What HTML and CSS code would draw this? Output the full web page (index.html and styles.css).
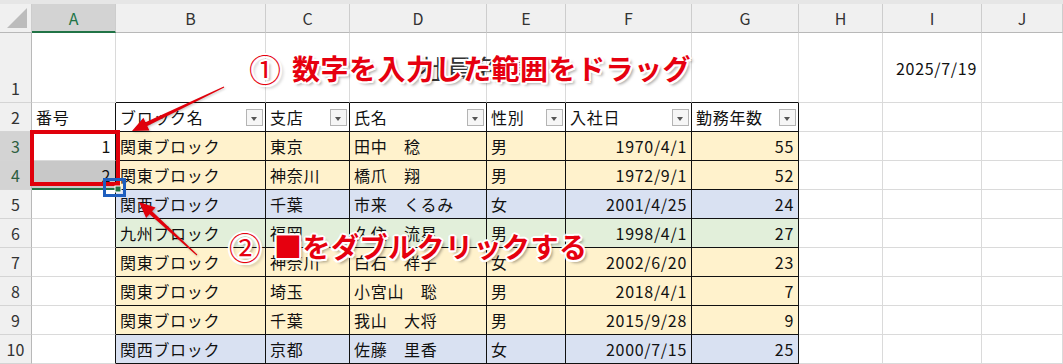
FILE: index.html
```html
<!DOCTYPE html>
<html lang="ja">
<head>
<meta charset="utf-8">
<link rel="stylesheet" href="styles.css">
</head>
<body>
<div class="app">
  <div class="strip"></div>
  <div class="sheet">
    <!-- column headers -->
    <div class="ch corner"><span class="tri"></span></div>
    <div class="ch sel">A</div>
    <div class="ch">B</div>
    <div class="ch">C</div>
    <div class="ch">D</div>
    <div class="ch">E</div>
    <div class="ch">F</div>
    <div class="ch">G</div>
    <div class="ch">H</div>
    <div class="ch">I</div>
    <div class="ch">J</div>

    <!-- row 1 -->
    <div class="rh bottom">1</div>
    <div class="c"></div>
    <div class="c bb"></div>
    <div class="c bb"></div>
    <div class="c bb spill"><span class="title">社員名簿</span></div>
    <div class="c bb"></div>
    <div class="c bb"></div>
    <div class="c bb"></div>
    <div class="c"></div>
    <div class="c num mid">2025/7/19</div>
    <div class="c"></div>

    <!-- row 2 -->
    <div class="rh">2</div>
    <div class="c lb">番号</div>
    <div class="c t th"><span>ブロック名</span><span class="fb"></span></div>
    <div class="c t th"><span>支店</span><span class="fb"></span></div>
    <div class="c t th"><span>氏名</span><span class="fb"></span></div>
    <div class="c t th"><span>性別</span><span class="fb"></span></div>
    <div class="c t th"><span>入社日</span><span class="fb"></span></div>
    <div class="c t th"><span>勤務年数</span><span class="fb"></span></div>
    <div class="c"></div>
    <div class="c"></div>
    <div class="c"></div>

    <!-- row 3 -->
    <div class="rh sel">3</div>
    <div class="c lb num">1</div>
    <div class="c t y">関東ブロック</div>
    <div class="c t y">東京</div>
    <div class="c t y">田中　稔</div>
    <div class="c t y">男</div>
    <div class="c t y num">1970/4/1</div>
    <div class="c t y num">55</div>
    <div class="c"></div>
    <div class="c"></div>
    <div class="c"></div>

    <!-- row 4 -->
    <div class="rh sel">4</div>
    <div class="c lb num selcell">2</div>
    <div class="c t y">関東ブロック</div>
    <div class="c t y">神奈川</div>
    <div class="c t y">橋爪　翔</div>
    <div class="c t y">男</div>
    <div class="c t y num">1972/9/1</div>
    <div class="c t y num">52</div>
    <div class="c"></div>
    <div class="c"></div>
    <div class="c"></div>

    <!-- row 5 -->
    <div class="rh">5</div>
    <div class="c lb"></div>
    <div class="c t b">関西ブロック</div>
    <div class="c t b">千葉</div>
    <div class="c t b">市来　くるみ</div>
    <div class="c t b">女</div>
    <div class="c t b num">2001/4/25</div>
    <div class="c t b num">24</div>
    <div class="c"></div>
    <div class="c"></div>
    <div class="c"></div>

    <!-- row 6 -->
    <div class="rh">6</div>
    <div class="c lb"></div>
    <div class="c t g">九州ブロック</div>
    <div class="c t g">福岡</div>
    <div class="c t g">久住　流星</div>
    <div class="c t g">男</div>
    <div class="c t g num">1998/4/1</div>
    <div class="c t g num">27</div>
    <div class="c"></div>
    <div class="c"></div>
    <div class="c"></div>

    <!-- row 7 -->
    <div class="rh">7</div>
    <div class="c lb"></div>
    <div class="c t y">関東ブロック</div>
    <div class="c t y">神奈川</div>
    <div class="c t y">白石　祥子</div>
    <div class="c t y">女</div>
    <div class="c t y num">2002/6/20</div>
    <div class="c t y num">23</div>
    <div class="c"></div>
    <div class="c"></div>
    <div class="c"></div>

    <!-- row 8 -->
    <div class="rh">8</div>
    <div class="c lb"></div>
    <div class="c t y">関東ブロック</div>
    <div class="c t y">埼玉</div>
    <div class="c t y">小宮山　聡</div>
    <div class="c t y">男</div>
    <div class="c t y num">2018/4/1</div>
    <div class="c t y num">7</div>
    <div class="c"></div>
    <div class="c"></div>
    <div class="c"></div>

    <!-- row 9 -->
    <div class="rh">9</div>
    <div class="c lb"></div>
    <div class="c t y">関東ブロック</div>
    <div class="c t y">千葉</div>
    <div class="c t y">我山　大将</div>
    <div class="c t y">男</div>
    <div class="c t y num">2015/9/28</div>
    <div class="c t y num">9</div>
    <div class="c"></div>
    <div class="c"></div>
    <div class="c"></div>

    <!-- row 10 -->
    <div class="rh">10</div>
    <div class="c lb"></div>
    <div class="c t b">関西ブロック</div>
    <div class="c t b">京都</div>
    <div class="c t b">佐藤　里香</div>
    <div class="c t b">女</div>
    <div class="c t b num">2000/7/15</div>
    <div class="c t b num">25</div>
    <div class="c"></div>
    <div class="c"></div>
    <div class="c"></div>
  </div>

  <!-- annotations overlay -->
  <svg class="marks" width="1063" height="364" viewBox="0 0 1063 364">
    <rect x="32" y="132" width="86" height="52" fill="none" stroke="#e0000b" stroke-width="4"/>
    <rect x="115" y="186" width="6" height="6" fill="#217346" stroke="#fff" stroke-width="1"/>
    <rect x="104.5" y="179.5" width="20" height="16" fill="none" stroke="#1f5fbf" stroke-width="3"/>
    <g class="arrow">
      <polygon points="223.8,86.5 224.2,87.5 147.3,125.9 149.4,130.4 132,131 143.4,117.8 145.5,122.3" fill="#e0000b"/>
      <polygon points="197.3,254.6 196.7,255.4 149.5,214.3 146.1,218.0 139,202 155.5,207.6 152.1,211.3" fill="#e0000b"/>
    </g>
  </svg>
  <div class="note note1"><span class="circ">①</span><span class="msg">数字を入力した範囲をドラッグ</span></div>
  <div class="note note2"><span class="circ">②</span><span class="msg">■をダブルクリックする</span></div>
</div>
</body>
</html>
```

FILE: styles.css
```css
* { box-sizing: border-box; }
html, body { margin: 0; padding: 0; background: #fff; }
body { width: 1063px; height: 364px; overflow: hidden; }

.app {
  position: relative;
  width: 1063px;
  height: 364px;
  font-family: "Noto Sans CJK JP", "Noto Sans", sans-serif;
  color: #111;
}

.strip { height: 4px; background: #e6e6e6; }

.sheet {
  display: grid;
  grid-template-columns: 32px 84px 150px 84px 137px 79px 126px 107px 84px 99px 81px;
  grid-template-rows: 29px 70px repeat(9, 29px);
}

/* column headers */
.ch {
  background: #f0f0f0;
  border-right: 1px solid #cdcdcd;
  border-bottom: 1px solid #b8b8b8;
  display: flex;
  align-items: center;
  justify-content: center;
  font-size: 16px;
  color: #333;
}
.ch.sel {
  background: #d3d3d3;
  border-bottom: 2px solid #217346;
  color: #217346;
}
.corner { position: relative; }
.corner .tri {
  position: absolute;
  right: 4px;
  bottom: 4px;
  width: 0;
  height: 0;
  border-left: 20px solid transparent;
  border-bottom: 20px solid #bcbcbc;
}

/* row headers */
.rh {
  background: #f0f0f0;
  border-right: 1px solid #b8b8b8;
  border-bottom: 1px solid #d4d4d4;
  display: flex;
  align-items: center;
  justify-content: center;
  font-size: 16px;
  color: #333;
}
.rh.bottom { align-items: flex-end; padding-bottom: 2px; }
.rh.sel { background: #d3d3d3; color: #2e5e40; }

/* cells */
.c {
  border-right: 1px solid #dadada;
  border-bottom: 1px solid #dadada;
  display: flex;
  align-items: center;
  padding: 0 4px;
  font-size: 16px;
  letter-spacing: 0.7px;
  white-space: nowrap;
  overflow: hidden;
}
.c.spill { overflow: visible; position: relative; z-index: 1; }
.c.num { justify-content: flex-end; }
.c.lb { border-right: 1px solid #111; }
.c.bb { border-bottom: 1px solid #111; }
.c.t {
  border-right: 1px solid #111;
  border-bottom: 1px solid #111;
}
.c.th { justify-content: space-between; padding-right: 2px; background: #fff; }
.c.y { background: #fff2cc; }
.c.b { background: #d9e1f2; }
.c.g { background: #e2efda; }
.c.selcell { background: #c8c8c8; border-bottom: 2px solid #217346; }

.title {
  font-size: 26px;
  margin-left: 66px;
  color: #333;
  letter-spacing: 1px;
}

.fb {
  width: 17px;
  height: 17px;
  border: 1px solid #b4b4b4;
  background: #f6f6f6;
  position: relative;
  flex: none;
}
.fb::after {
  content: "";
  position: absolute;
  left: 4px;
  top: 7px;
  border-left: 3.5px solid transparent;
  border-right: 3.5px solid transparent;
  border-top: 4px solid #555;
}

/* overlay annotations */
.marks {
  position: absolute;
  left: 0;
  top: 0;
  pointer-events: none;
  z-index: 2;
}
.arrow { filter: drop-shadow(1px 1px 1px rgba(0,0,0,0.25)); }

.note {
  position: absolute;
  z-index: 3;
  display: flex;
  align-items: center;
  color: #e6000f;
  white-space: nowrap;
  text-shadow:
    2px 0 0 #fff, -2px 0 0 #fff, 0 2px 0 #fff, 0 -2px 0 #fff,
    1.5px 1.5px 0 #fff, -1.5px 1.5px 0 #fff, 1.5px -1.5px 0 #fff, -1.5px -1.5px 0 #fff,
    3px 3px 3px rgba(0,0,0,0.35);
}
.note .circ {
  font-size: 32px;
  font-weight: 400;
  margin-right: 11px;
}
.note .msg {
  font-size: 28px;
  font-weight: 700;
  letter-spacing: 0.5px;
}
.note1 { left: 249px; top: 45px; }
.note2 { left: 229px; top: 223px; }
.note2 .circ { margin-right: 13px; }
```
